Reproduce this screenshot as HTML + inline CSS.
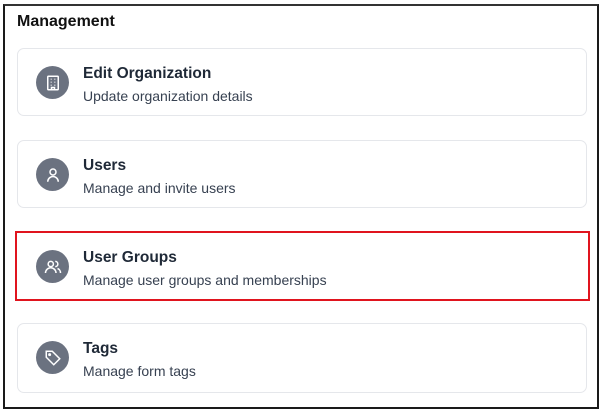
<!DOCTYPE html><html><head><style>
body{margin:0;width:604px;height:412px;background:#fff;font-family:"Liberation Sans",sans-serif;position:relative;overflow:hidden}
.frame{position:absolute;left:3px;top:4px;width:592px;height:401px;border:2px solid #1a1a1a;border-top-color:#333}
h1{position:absolute;left:17px;top:13px;margin:0;font-size:16px;font-weight:bold;color:#111}
.card{position:absolute;left:17px;width:570px;height:68px;border:1px solid #e5e7eb;border-radius:7px;box-sizing:border-box}
.red{position:absolute;left:15px;top:231px;width:575px;height:70px;border:2px solid #e0141e;box-sizing:border-box}
.ic{position:absolute;left:18px;top:17px;width:33px;height:33px;border-radius:50%;background:#6b7280;display:flex;align-items:center;justify-content:center}
.t{position:absolute;left:65px;top:16px;font-size:15.5px;font-weight:bold;color:#1f2937}
.s{position:absolute;left:65px;top:39px;font-size:14px;color:#374151}
</style></head><body>
<div class="frame"></div>
<h1>Management</h1>
<div class="card" style="top:48px"><div class="ic"><svg width="18" height="18" viewBox="0 0 24 24" fill="none" stroke="#fff" stroke-width="2"><rect x="5" y="3" width="14" height="18" rx="1"/><path d="M9 7h1M14 7h1M9 11h1M14 11h1M9 15h1M14 15h1M10 21v-3h4v3"/></svg></div><div class="t">Edit Organization</div><div class="s">Update organization details</div></div>
<div class="card" style="top:140px"><div class="ic"><svg width="18" height="18" viewBox="0 0 24 24" fill="none" stroke="#fff" stroke-width="2"><circle cx="12" cy="8" r="4"/><path d="M5 21a7 7 0 0 1 14 0"/></svg></div><div class="t">Users</div><div class="s">Manage and invite users</div></div>
<div class="card" style="top:232px;border-color:transparent"><div class="ic"><svg width="18" height="18" viewBox="0 0 24 24" fill="none" stroke="#fff" stroke-width="2"><circle cx="9" cy="8" r="3.5"/><path d="M2 20a7 7 0 0 1 14 0M15 4.5a3.5 3.5 0 0 1 0 7M18 14a6 6 0 0 1 4 6"/></svg></div><div class="t">User Groups</div><div class="s">Manage user groups and memberships</div></div>
<div class="red"></div>
<div class="card" style="top:323px;height:70px"><div class="ic"><svg width="18" height="18" viewBox="0 0 24 24" fill="none" stroke="#fff" stroke-width="2"><path d="M3 3h8l10 10-8 8L3 11z"/><circle cx="7.5" cy="7.5" r="1"/></svg></div><div class="t">Tags</div><div class="s">Manage form tags</div></div>
</body></html>
